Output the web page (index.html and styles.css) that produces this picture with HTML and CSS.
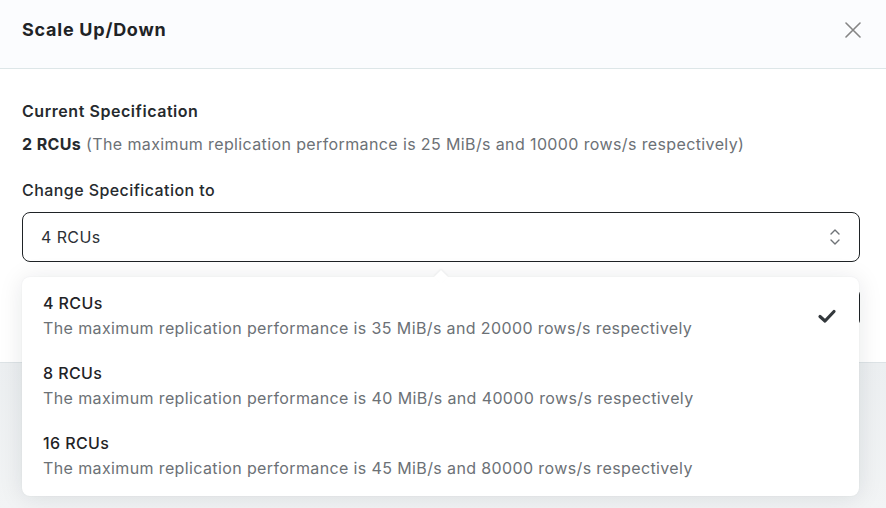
FILE: index.html
```html
<!DOCTYPE html>
<html>
<head>
<meta charset="utf-8">
<link rel="stylesheet" href="styles.css">
</head>
<body>
<div class="modal">
  <header class="modal-header">
    <h1 class="title">Scale Up/Down</h1>
    <button class="close" aria-label="Close">
      <svg width="16" height="16" viewBox="0 0 16 16"><path d="M1 1L15 15M15 1L1 15" stroke="#858585" stroke-width="1.6" fill="none" stroke-linecap="round"/></svg>
    </button>
  </header>
  <main class="modal-body">
    <h2 class="label-bold">Current Specification</h2>
    <p class="current"><strong>2 RCUs</strong> (The maximum replication performance is 25 MiB/s and 10000 rows/s respectively)</p>
    <h2 class="label">Change Specification to</h2>
    <div class="select-wrap">
      <div class="select">
        <span>4 RCUs</span>
        <svg class="updown" width="12" height="18" viewBox="0 0 12 18"><path d="M2 6L6 2L10 6M2 12L6 16L10 12" stroke="#6f7377" stroke-width="1.4" fill="none" stroke-linecap="round" stroke-linejoin="round"/></svg>
      </div>
      <div class="dropdown">
        <div class="arrow"></div>
        <div class="option">
          <div class="opt-text">
            <div class="opt-title">4 RCUs</div>
            <div class="opt-desc">The maximum replication performance is 35 MiB/s and 20000 rows/s respectively</div>
          </div>
          <svg class="check" width="20" height="16" viewBox="0 0 20 16"><path d="M3 8.5L8 13L17 3.5" stroke="#33383c" stroke-width="3.2" fill="none" stroke-linecap="round" stroke-linejoin="round"/></svg>
        </div>
        <div class="option">
          <div class="opt-text">
            <div class="opt-title">8 RCUs</div>
            <div class="opt-desc">The maximum replication performance is 40 MiB/s and 40000 rows/s respectively</div>
          </div>
        </div>
        <div class="option">
          <div class="opt-text">
            <div class="opt-title">16 RCUs</div>
            <div class="opt-desc">The maximum replication performance is 45 MiB/s and 80000 rows/s respectively</div>
          </div>
        </div>
      </div>
    </div>
    <div class="actions">
      <button class="primary">Confirm</button>
    </div>
  </main>
  <footer class="modal-footer"></footer>
</div>
</body>
</html>
```
FILE: styles.css
```css
* { box-sizing: border-box; }
html, body { margin: 0; padding: 0; background: #ffffff; }
body {
  font-family: Inter, "Noto Sans", sans-serif;
  color: #1f2326;
  width: 886px;
  height: 508px;
  overflow: hidden;
}
.modal {
  display: flex;
  flex-direction: column;
  height: 508px;
}
.modal-header {
  height: 69px;
  flex: none;
  display: flex;
  align-items: flex-start;
  justify-content: space-between;
  padding: 19px 22px 0;
  background: #fbfcfe;
  border-bottom: 1px solid #dde6e8;
}
.title {
  margin: 0;
  font-size: 18px;
  line-height: 22px;
  font-weight: 700;
  color: #1f2326;
  letter-spacing: 0.75px;
}
.close {
  border: 0;
  background: none;
  padding: 0;
  margin: 3px 3px 0 0;
  width: 16px;
  height: 16px;
  display: flex;
}
.modal-body {
  flex: none;
  padding: 32px 26px 36px 22px;
  background: #ffffff;
}
.label-bold {
  margin: 0;
  font-size: 16px;
  font-weight: 600;
  line-height: 20px;
  color: #262a2e;
  letter-spacing: 0.55px;
}
.current {
  margin: 13px 0 0;
  font-size: 16px;
  line-height: 20px;
  color: #6c7176;
  letter-spacing: 0.38px;
}
.current strong { color: #262a2e; font-weight: 700; }
.label {
  margin: 26px 0 0;
  font-size: 16px;
  font-weight: 500;
  line-height: 20px;
  color: #262a2e;
  letter-spacing: 0.43px;
}
.select-wrap {
  position: relative;
  margin-top: 12px;
}
.select {
  height: 50px;
  border: 1px solid #1f2326;
  border-radius: 8px;
  display: flex;
  align-items: center;
  justify-content: space-between;
  padding: 0 18px 0 18px;
  font-size: 16px;
  letter-spacing: 0.4px;
  color: #2d3135;
}
.dropdown {
  position: absolute;
  left: 0;
  right: 1px;
  top: 65px;
  background: #ffffff;
  border-radius: 8px;
  box-shadow: 0 2px 24px rgba(20, 30, 40, 0.10), 0 0 2px rgba(20, 30, 40, 0.06);
  padding: 3px 0 6px;
  z-index: 10;
}
.arrow {
  position: absolute;
  top: -5px;
  left: 50%;
  width: 10px;
  height: 10px;
  margin-left: -5px;
  background: #fff;
  transform: rotate(45deg);
  box-shadow: -1px -1px 2px rgba(20, 30, 40, 0.05);
}
.option {
  position: relative;
  height: 70px;
  display: flex;
  align-items: center;
  justify-content: space-between;
  padding: 0 22px 0 21px;
}
.opt-title {
  font-size: 16px;
  line-height: 20px;
  color: #1f2326;
  font-weight: 500;
  letter-spacing: 0.4px;
}
.opt-desc {
  margin-top: 5px;
  font-size: 16px;
  line-height: 20px;
  color: #6c7176;
  letter-spacing: 0.38px;
}
.check { flex: none; margin-top: 2px; }
.actions {
  display: flex;
  justify-content: flex-end;
  margin-top: 27px;
}
.primary {
  height: 37px;
  width: 110px;
  border: 0;
  border-radius: 6px;
  background: #1f2326;
  color: #fff;
  font-family: inherit;
  font-size: 15px;
}
.modal-footer {
  flex: 1;
  background: linear-gradient(#eceff1, #f2f4f5);
  border-top: 1px solid #dde3e6;
}
```
